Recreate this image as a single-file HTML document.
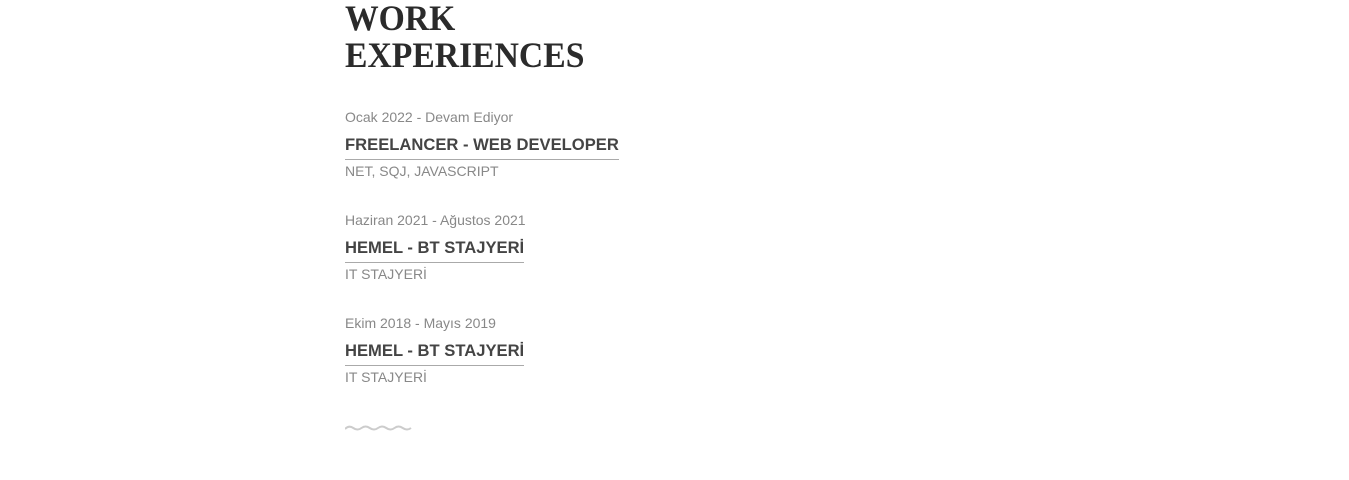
<!DOCTYPE html>
<html><head><style>
body{margin:0;background:#fff;width:1349px;height:480px;overflow:hidden;font-family:"Liberation Sans",sans-serif;}
h1{position:absolute;left:345px;top:0;margin:0;font-family:"Liberation Serif",serif;font-weight:bold;font-size:36px;line-height:37px;color:#2b2b2b;transform:scaleX(0.935);transform-origin:0 0;}
.d{position:absolute;left:345px;font-size:14px;color:#888;line-height:16px;}
.t{position:absolute;left:345px;font-size:16.6px;font-weight:bold;color:#444;line-height:18px;padding-bottom:5px;border-bottom:1px solid #aaa;}
.s{position:absolute;left:345px;font-size:14px;color:#888;line-height:16px;}
</style></head><body>
<h1>WORK<br>EXPERIENCES</h1>
<div class="d" style="top:109px">Ocak 2022 - Devam Ediyor</div>
<div class="t" style="top:136px">FREELANCER - WEB DEVELOPER</div>
<div class="s" style="top:163px">NET, SQJ, JAVASCRIPT</div>
<div class="d" style="top:212px">Haziran 2021 - Ağustos 2021</div>
<div class="t" style="top:239px">HEMEL - BT STAJYERİ</div>
<div class="s" style="top:266px">IT STAJYERİ</div>
<div class="d" style="top:315px">Ekim 2018 - Mayıs 2019</div>
<div class="t" style="top:342px">HEMEL - BT STAJYERİ</div>
<div class="s" style="top:369px">IT STAJYERİ</div>
<svg style="position:absolute;left:345px;top:423px" width="68" height="10"><path d="M0 6 Q4 2 8.25 5 T16.5 5 T24.75 5 T33 5 T41.25 5 T49.5 5 T57.75 5 T66 5" fill="none" stroke="#ccc" stroke-width="2"/></svg>
</body></html>
